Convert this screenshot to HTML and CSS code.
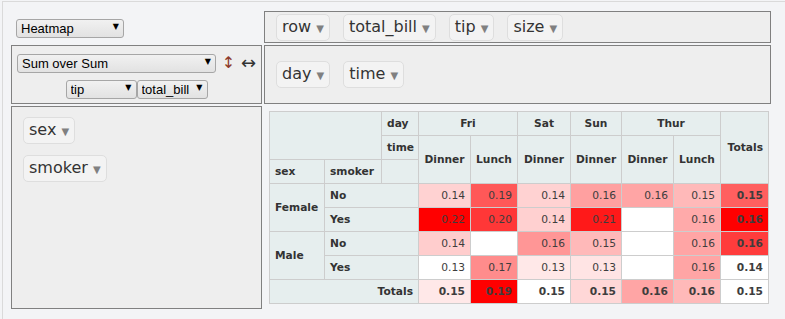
FILE: index.html
```html
<!DOCTYPE html>
<html lang="en">

<head>
    <meta charset="UTF-8">
    <meta name="viewport" content="width=device-width, initial-scale=1.0">
    <title>Pivot Table</title>
    <link rel="stylesheet" href="styles.css">
</head>

<body>
    <div class="output">
        <div class="pvtUi">
            <div class="pvtRenderer">
                <span class="select select-renderer">
                    <select>
                        <option>Heatmap</option>
                    </select>
                </span>
            </div>

            <ul class="pvtAxisContainer pvtUnused">
                <li><span class="pvtAttr">row <span class="pvtTriangle">&#x25BC;</span></span></li>
                <li><span class="pvtAttr">total_bill <span class="pvtTriangle">&#x25BC;</span></span></li>
                <li><span class="pvtAttr">tip <span class="pvtTriangle">&#x25BC;</span></span></li>
                <li><span class="pvtAttr">size <span class="pvtTriangle">&#x25BC;</span></span></li>
            </ul>

            <div class="pvtVals">
                <div class="pvtAggregatorRow">
                    <span class="select select-aggregator">
                        <select>
                            <option>Sum over Sum</option>
                        </select>
                    </span>
                    <a class="pvtRowOrder" role="button">&#x2195;</a>
                    <a class="pvtColOrder" role="button">&#x2194;</a>
                </div>
                <div class="pvtAttrRow">
                    <span class="select select-attr">
                        <select>
                            <option>tip</option>
                        </select>
                    </span><span class="select select-attr">
                        <select>
                            <option>total_bill</option>
                        </select>
                    </span>
                </div>
            </div>

            <ul class="pvtAxisContainer pvtCols">
                <li><span class="pvtAttr">day <span class="pvtTriangle">&#x25BC;</span></span></li>
                <li><span class="pvtAttr">time <span class="pvtTriangle">&#x25BC;</span></span></li>
            </ul>

            <ul class="pvtAxisContainer pvtRows">
                <li><span class="pvtAttr">sex <span class="pvtTriangle">&#x25BC;</span></span></li>
                <li><span class="pvtAttr">smoker <span class="pvtTriangle">&#x25BC;</span></span></li>
            </ul>

            <div class="pvtRendererArea">
                <table class="pvtTable">
                    <colgroup>
                        <col class="col-sex">
                        <col class="col-smoker">
                        <col class="col-axis">
                        <col class="col-dinner">
                        <col class="col-lunch">
                        <col class="col-sat">
                        <col class="col-sun">
                        <col class="col-dinner">
                        <col class="col-lunch">
                        <col class="col-total">
                    </colgroup>
                    <thead>
                        <tr>
                            <th colspan="2" rowspan="2"></th>
                            <th class="pvtAxisLabel">day</th>
                            <th class="pvtColLabel" colspan="2">Fri</th>
                            <th class="pvtColLabel">Sat</th>
                            <th class="pvtColLabel">Sun</th>
                            <th class="pvtColLabel" colspan="2">Thur</th>
                            <th class="pvtTotalLabel pvtColTotals" rowspan="3">Totals</th>
                        </tr>
                        <tr>
                            <th class="pvtAxisLabel">time</th>
                            <th class="pvtColLabel" rowspan="2">Dinner</th>
                            <th class="pvtColLabel" rowspan="2">Lunch</th>
                            <th class="pvtColLabel" rowspan="2">Dinner</th>
                            <th class="pvtColLabel" rowspan="2">Dinner</th>
                            <th class="pvtColLabel" rowspan="2">Dinner</th>
                            <th class="pvtColLabel" rowspan="2">Lunch</th>
                        </tr>
                        <tr>
                            <th class="pvtAxisLabel">sex</th>
                            <th class="pvtAxisLabel">smoker</th>
                            <th></th>
                        </tr>
                    </thead>
                    <tbody>
                        <tr>
                            <th class="pvtRowLabel" rowspan="2">Female</th>
                            <th class="pvtRowLabel" colspan="2">No</th>
                            <td class="pvtVal" style="background-color: rgb(255, 210, 210)">0.14</td>
                            <td class="pvtVal" style="background-color: rgb(255, 88, 88)">0.19</td>
                            <td class="pvtVal" style="background-color: rgb(255, 210, 210)">0.14</td>
                            <td class="pvtVal" style="background-color: rgb(255, 160, 160)">0.16</td>
                            <td class="pvtVal" style="background-color: rgb(255, 165, 165)">0.16</td>
                            <td class="pvtVal" style="background-color: rgb(255, 185, 185)">0.15</td>
                            <td class="pvtTotal" style="background-color: rgb(255, 95, 95)">0.15</td>
                        </tr>
                        <tr>
                            <th class="pvtRowLabel" colspan="2">Yes</th>
                            <td class="pvtVal" style="background-color: rgb(255, 0, 0)">0.22</td>
                            <td class="pvtVal" style="background-color: rgb(255, 55, 55)">0.20</td>
                            <td class="pvtVal" style="background-color: rgb(255, 208, 208)">0.14</td>
                            <td class="pvtVal" style="background-color: rgb(255, 25, 25)">0.21</td>
                            <td class="pvtVal"></td>
                            <td class="pvtVal" style="background-color: rgb(255, 170, 170)">0.16</td>
                            <td class="pvtTotal" style="background-color: rgb(255, 0, 0)">0.16</td>
                        </tr>
                        <tr>
                            <th class="pvtRowLabel" rowspan="2">Male</th>
                            <th class="pvtRowLabel" colspan="2">No</th>
                            <td class="pvtVal" style="background-color: rgb(255, 205, 205)">0.14</td>
                            <td class="pvtVal"></td>
                            <td class="pvtVal" style="background-color: rgb(255, 150, 150)">0.16</td>
                            <td class="pvtVal" style="background-color: rgb(255, 185, 185)">0.15</td>
                            <td class="pvtVal"></td>
                            <td class="pvtVal" style="background-color: rgb(255, 165, 165)">0.16</td>
                            <td class="pvtTotal" style="background-color: rgb(255, 60, 60)">0.16</td>
                        </tr>
                        <tr>
                            <th class="pvtRowLabel" colspan="2">Yes</th>
                            <td class="pvtVal">0.13</td>
                            <td class="pvtVal" style="background-color: rgb(255, 140, 140)">0.17</td>
                            <td class="pvtVal" style="background-color: rgb(255, 232, 232)">0.13</td>
                            <td class="pvtVal" style="background-color: rgb(255, 228, 228)">0.13</td>
                            <td class="pvtVal"></td>
                            <td class="pvtVal" style="background-color: rgb(255, 165, 165)">0.16</td>
                            <td class="pvtTotal">0.14</td>
                        </tr>
                        <tr>
                            <th class="pvtTotalLabel" colspan="3">Totals</th>
                            <td class="pvtTotal" style="background-color: rgb(255, 232, 232)">0.15</td>
                            <td class="pvtTotal" style="background-color: rgb(255, 0, 0)">0.19</td>
                            <td class="pvtTotal">0.15</td>
                            <td class="pvtTotal" style="background-color: rgb(255, 215, 215)">0.15</td>
                            <td class="pvtTotal" style="background-color: rgb(255, 165, 165)">0.16</td>
                            <td class="pvtTotal" style="background-color: rgb(255, 185, 185)">0.16</td>
                            <td class="pvtGrandTotal">0.15</td>
                        </tr>
                    </tbody>
                </table>
            </div>
        </div>
    </div>
</body>

</html>
```

FILE: styles.css
```css
* {
    margin: 0;
    padding: 0;
    box-sizing: border-box;
}

body {
    background-color: #f3f4f6;
    font-family: 'DejaVu Sans', Verdana, sans-serif;
    color: #333;
}

.output {
    margin: 1px 0 0 2px;
    height: calc(100vh - 1px);
    border-top: 1px solid #dadada;
    border-left: 1px solid #dadada;
    padding: 9px 0 0 8px;
}

.pvtUi {
    display: grid;
    grid-template-columns: 251px 507px;
    grid-template-rows: 32px 59px auto;
    gap: 2px;
}

/* Selects */
.select {
    position: relative;
    display: inline-block;
    height: 19px;
    vertical-align: top;
}

.select select {
    appearance: none;
    -webkit-appearance: none;
    width: 100%;
    height: 100%;
    padding: 0 16px 0 4px;
    font-family: 'Liberation Sans', Arial, sans-serif;
    font-size: 13px;
    color: #000;
    background: linear-gradient(#f1f1f1, #e2e2e2);
    border: 1px solid #a6a6a6;
    border-radius: 3px;
    outline: none;
}

.select::after {
    content: "\25BC";
    position: absolute;
    right: 5px;
    top: 4px;
    font-family: 'DejaVu Sans', sans-serif;
    font-size: 8px;
    line-height: 10px;
    color: #000;
    pointer-events: none;
}

.select-renderer {
    width: 108px;
}

.select-aggregator {
    width: 199px;
}

.select-attr {
    width: 71px;
}

.pvtRenderer {
    padding: 7px 0 0 5px;
}

/* Axis containers */
.pvtAxisContainer,
.pvtVals {
    border: 1px solid gray;
    background: #eee;
    list-style: none;
}

.pvtAxisContainer li {
    list-style-type: none;
}

.pvtUnused,
.pvtCols {
    display: flex;
    align-items: center;
    gap: 13px;
    padding-left: 11px;
}

.pvtRows {
    display: flex;
    flex-direction: column;
    align-items: flex-start;
    gap: 11px;
    padding: 10px 11px;
}

.pvtAttr {
    display: inline-block;
    background: #f3f3f3;
    border: 1px solid #dedede;
    border-radius: 5px;
    padding: 2px 5px;
    font-size: 16px;
    line-height: 19px;
    white-space: nowrap;
    color: #333;
}

.pvtTriangle {
    font-size: 10px;
    color: gray;
}

.pvtVals {
    display: flex;
    flex-direction: column;
    align-items: center;
    gap: 7px;
    padding-top: 7px;
    white-space: nowrap;
}

.pvtAggregatorRow,
.pvtAttrRow {
    display: flex;
    align-items: flex-start;
    height: 19px;
}

.pvtRowOrder,
.pvtColOrder {
    display: inline-block;
    width: 15px;
    margin-left: 5px;
    font-family: 'DejaVu Sans', sans-serif;
    line-height: 19px;
    cursor: pointer;
}

.pvtRowOrder {
    text-align: center;
    font-size: 16px;
    color: #8e3b2c;
}

.pvtColOrder {
    font-size: 18px;
    color: #333;
}

/* Table */
.pvtRendererArea {
    padding: 5px;
}

table.pvtTable {
    table-layout: fixed;
    width: 500px;
    font-size: 8pt;
    line-height: 13px;
    text-align: left;
    border-collapse: collapse;
}

.col-sex { width: 55px; }
.col-smoker { width: 57px; }
.col-axis { width: 37px; }
.col-dinner { width: 52px; }
.col-lunch { width: 47px; }
.col-sat { width: 53px; }
.col-sun { width: 51px; }
.col-total { width: 48px; }

table.pvtTable th {
    background-color: #e6eeee;
    border: 1px solid #cdcdcd;
    padding: 5px;
    font-weight: bold;
    color: #333;
    vertical-align: middle;
    white-space: nowrap;
}

table.pvtTable .pvtColLabel {
    text-align: center;
}

table.pvtTable .pvtColTotals {
    text-align: center;
}

table.pvtTable .pvtTotalLabel {
    text-align: right;
}

table.pvtTable td {
    color: #3d3d3d;
    padding: 5px;
    background-color: #fff;
    border: 1px solid #cdcdcd;
    vertical-align: top;
    text-align: right;
}

.pvtTotal,
.pvtGrandTotal {
    font-weight: bold;
}
```
